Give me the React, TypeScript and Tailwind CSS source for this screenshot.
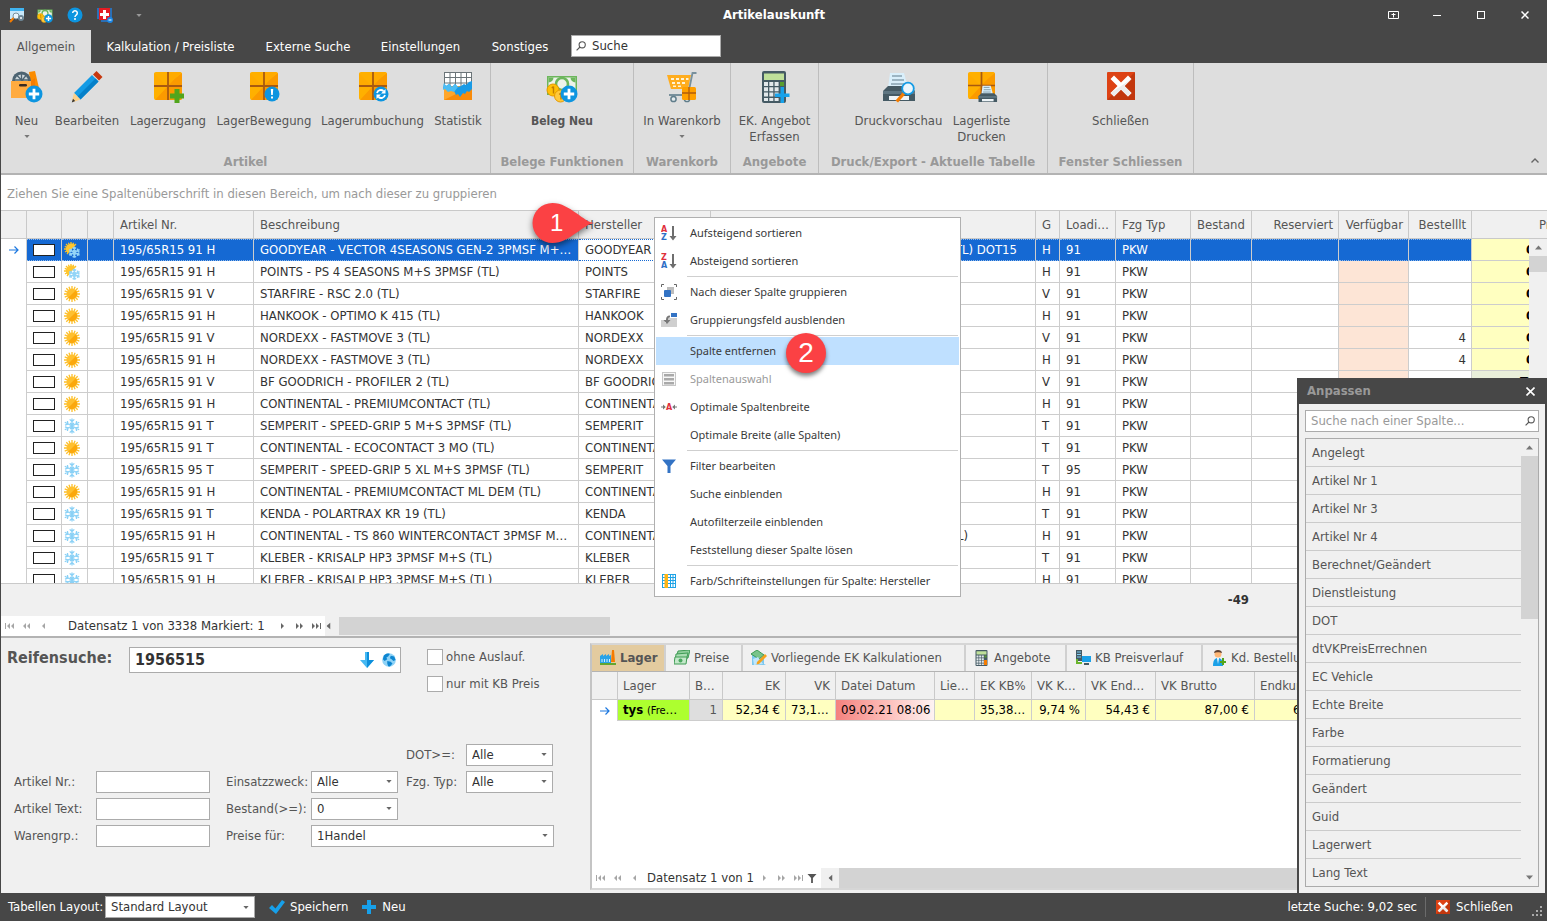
import React from "react";

type Season = "all" | "summer" | "winter";

interface Tyre {
  size: string;
  season: Season;
  text: string;
  brand: string;
  speed: string;
  load: string;
  ordered?: string;
  extra?: string;
  extraClass?: string;
}

const tyres: Tyre[] = [
  { size: "195/65R15 91 H", season: "all", text: "GOODYEAR - VECTOR 4SEASONS GEN-2 3PMSF M+S (TL) DOT15", brand: "GOODYEAR", speed: "H", load: "91", extra: "(TL) DOT15", extraClass: "pr-[18px]" },
  { size: "195/65R15 91 H", season: "all", text: "POINTS - PS 4 SEASONS M+S 3PMSF (TL)", brand: "POINTS", speed: "H", load: "91" },
  { size: "195/65R15 91 V", season: "summer", text: "STARFIRE - RSC 2.0 (TL)", brand: "STARFIRE", speed: "V", load: "91" },
  { size: "195/65R15 91 H", season: "summer", text: "HANKOOK - OPTIMO K 415 (TL)", brand: "HANKOOK", speed: "H", load: "91" },
  { size: "195/65R15 91 V", season: "summer", text: "NORDEXX - FASTMOVE 3 (TL)", brand: "NORDEXX", speed: "V", load: "91", ordered: "4" },
  { size: "195/65R15 91 H", season: "summer", text: "NORDEXX - FASTMOVE 3 (TL)", brand: "NORDEXX", speed: "H", load: "91", ordered: "4" },
  { size: "195/65R15 91 V", season: "summer", text: "BF GOODRICH - PROFILER 2 (TL)", brand: "BF GOODRICH", speed: "V", load: "91" },
  { size: "195/65R15 91 H", season: "summer", text: "CONTINENTAL - PREMIUMCONTACT (TL)", brand: "CONTINENTAL", speed: "H", load: "91" },
  { size: "195/65R15 91 T", season: "winter", text: "SEMPERIT - SPEED-GRIP 5 M+S 3PMSF (TL)", brand: "SEMPERIT", speed: "T", load: "91" },
  { size: "195/65R15 91 T", season: "summer", text: "CONTINENTAL - ECOCONTACT 3 MO (TL)", brand: "CONTINENTAL", speed: "T", load: "91" },
  { size: "195/65R15 95 T", season: "winter", text: "SEMPERIT - SPEED-GRIP 5 XL M+S 3PMSF (TL)", brand: "SEMPERIT", speed: "T", load: "95" },
  { size: "195/65R15 91 H", season: "summer", text: "CONTINENTAL - PREMIUMCONTACT ML DEM (TL)", brand: "CONTINENTAL", speed: "H", load: "91" },
  { size: "195/65R15 91 T", season: "winter", text: "KENDA - POLARTRAX KR 19 (TL)", brand: "KENDA", speed: "T", load: "91" },
  { size: "195/65R15 91 H", season: "winter", text: "CONTINENTAL - TS 860 WINTERCONTACT 3PMSF M+S (TL)", brand: "CONTINENTAL", speed: "H", load: "91", extra: "(TL)", extraClass: "pr-[67px]" },
  { size: "195/65R15 91 T", season: "winter", text: "KLEBER - KRISALP HP3 3PMSF M+S (TL)", brand: "KLEBER", speed: "T", load: "91" },
  { size: "195/65R15 91 H", season: "winter", text: "KLEBER - KRISALP HP3 3PMSF M+S (TL)", brand: "KLEBER", speed: "H", load: "91" },
];

const hiddenColumns = [
  "Angelegt", "Artikel Nr 1", "Artikel Nr 3", "Artikel Nr 4", "Berechnet/Geändert", "Dienstleistung",
  "DOT", "dtVKPreisErrechnen", "EC Vehicle", "Echte Breite", "Farbe", "Formatierung", "Geändert",
  "Guid", "Lagerwert", "Lang Text",
];

/* ---------- small shared drawings ---------- */

const Caret = ({ className = "" }: { className?: string }) => (
  <svg viewBox="0 0 7 4" className={`shrink-0 ${className}`} fill="currentColor"><path d="M0 0h7L3.5 4z" /></svg>
);

const SmallPlus = () => (
  <g>
    <circle cx="23" cy="23" r="8.5" fill="#0d95e0" />
    <path d="M23 17.8v10.4M17.8 23h10.4" stroke="#fff" strokeWidth="2.8" />
  </g>
);

const Sun = () => (
  <svg viewBox="0 0 16 16" className="h-4 w-4">
    <g stroke="#fdc02a" strokeWidth="1.3">
      <path d="M8 0v16M0 8h16M2.300 2.300l11.400 11.400M13.700 2.300L2.300 13.700M4.900.7l6.200 14.600M11.100.7L4.900 15.300M.7 4.900l14.600 6.200M.7 11.100l14.600-6.200" />
    </g>
    <circle cx="8" cy="8" r="5.400" fill="#ffc02e" />
    <path d="M11.800 4.200a5.400 5.400 0 0 1-7.600 7.600z" fill="#fba80c" />
  </svg>
);

const flake = "M8 .5v15M.8 4.200l14.400 7.600M.8 11.800l14.400-7.600M5.700 1.400L8 3.600l2.300-2.200M5.700 14.600L8 12.400l2.300 2.200M1 7.200l3-1.100L3.400 3M15 8.800l-3 1.100.6 3.100M1 8.800l3 1.100L3.400 13M15 7.200l-3-1.100.6-3.100M6 5l2 2 2-2M6 11l2-2 2 2";
const Snow = () => (
  <svg viewBox="0 0 16 16" className="h-4 w-4" fill="none" stroke="#8ad1f6" strokeWidth="1.300"><path d={flake} /></svg>
);

const SunSnow = () => (
  <svg viewBox="0 0 16 16" className="h-4 w-4">
    <g stroke="#fcc021" strokeWidth="1.300"><path d="M7 0v6M0 7h6M2 2l4 4M12 2L8 6M4.400.8L7 7M.8 4.400L7 7M9.600.8L7 7M1 10l5-3M3 12l4-5" /></g>
    <path d="M11.400 3.200A5 5 0 1 0 3.500 11z" fill="#ffc62e" />
    <g transform="translate(4.500 4.500) scale(.73)" fill="none" stroke="#93d5f7" strokeWidth="1.900"><path d={flake} /></g>
  </svg>
);

const RowArrow = () => (
  <svg viewBox="0 0 10 8" className="h-2 w-[10px]" fill="none" stroke="#1c78e0" strokeWidth="1.200"><path d="M0 4h9M5.500.5L9 4 5.500 7.500" /></svg>
);

const Magnifier = () => (
  <svg viewBox="0 0 10 10" className="h-[10px] w-[10px] shrink-0" fill="none" stroke="#555" strokeWidth="1.100"><circle cx="6.200" cy="3.800" r="3.100" /><path d="M4 6L.6 9.400" /></svg>
);

type NavKind = "first" | "pagePrev" | "prev" | "next" | "pageNext" | "last";

const NavGlyph = ({ kind, dim }: { kind: NavKind; dim?: boolean }) => {
  const paths = {
    first: "M0 0h1v6H0zM5 0v6L2 3zM9 0v6L6 3z",
    pagePrev: "M4 0v6L1 3zM8 0v6L5 3z",
    prev: "M6 0v6L3 3z",
    next: "M3 0v6l3-3z",
    pageNext: "M1 0v6l3-3zM5 0v6l3-3z",
    last: "M0 0v6l3-3zM4 0v6l3-3zM8 0h1v6H8z",
  };
  return (
    <svg viewBox="0 0 9 6" className="h-[6px] w-[9px]" fill={dim ? "#a6a6a6" : "#666"}><path d={paths[kind]} /></svg>
  );
};

const NavButton = (p: { kind: NavKind; dim?: boolean }) => (
  <button type="button" aria-label={p.kind} className="flex h-5 w-[17px] shrink-0 items-center justify-center"><NavGlyph {...p} /></button>
);

const RedX = ({ className }: { className: string }) => (
  <svg viewBox="0 0 28 28" className={className}>
    <rect width="28" height="28" rx="1" fill="#dd4214" />
    <path d="M28 0v28H0z" fill="#c2370d" />
    <path d="M7 3.500l7 7 7-7L24.500 7l-7 7 7 7-3.500 3.500-7-7-7 7L3.500 21l7-7-7-7z" fill="#fff" />
    <path d="M24.500 7l-7 7 7 7-3.500 3.500-7-7-7 7L3.500 21z" fill="#ececec" />
  </svg>
);

/* ---------- ribbon icons ---------- */

const Ribbon = ({ children }: { children: React.ReactNode }) => (
  <svg viewBox="0 0 32 32" className="h-8 w-8 shrink-0">{children}</svg>
);

const BoxShape = ({ size = 28 }: { size?: number }) => (
  <g transform={`translate(2 1) scale(${size / 28})`}>
    <rect width="28" height="28" rx="2" fill="#ffb000" />
    <path d="M28 1v25a2 2 0 0 1-2 2H1L13 15V13z" fill="#fb9a00" />
    <path d="M0 1l13 13H0zM15 0h12L15 13z" fill="#ffab00" />
    <path d="M14 0v28M0 14h28" stroke="#a85a10" strokeWidth="1.800" />
  </g>
);

const IconNew = () => (
  <Ribbon>
    <path d="M18 1l6-1 4 17h-8z" fill="#fb8c00" />
    <circle cx="10.500" cy="10" r="9.500" fill="#4d6472" />
    <circle cx="10.500" cy="10" r="6.500" fill="#cfd8dc" />
    <path d="M10.500 3v8M4 9h13M6 4.500l9 9M15 4.500L8 13" stroke="#4d6472" strokeWidth="1.300" />
    <path d="M0 10h20v17H0z" fill="#ffab40" />
    <path d="M20 10l4-3v19l-4 1z" fill="#f57c00" />
    <rect x="8" y="13" width="8" height="2.600" rx="1.300" fill="#3b2b20" />
    <SmallPlus />
  </Ribbon>
);
const IconPencil = () => (
  <Ribbon>
    <path d="M25.500 0l6 6-3.500 3.500-6-6z" fill="#c7380f" />
    <path d="M21 4l6.500 6.500L9.500 28.500 3 22z" fill="#139be5" />
    <path d="M24.500 7.500l3 3-18 18-3-3z" fill="#0580c9" />
    <path d="M3 22l6.500 6.500L2.500 31l-1.500-1z" fill="#fdd18a" />
    <path d="M2 27.800l2.200 2.200L.8 31.400z" fill="#333" />
  </Ribbon>
);
const IconBoxPlus = () => (
  <Ribbon><BoxShape /><path d="M22.500 18h5v4.500H32v5h-4.500V32h-5v-4.500H18v-5h4.500z" fill="#51a51c" /></Ribbon>
);
const IconBoxInfo = () => (
  <Ribbon><BoxShape /><circle cx="24" cy="23" r="7.500" fill="#0d95e0" /><path d="M22.800 18h2.400l-.4 6h-1.600zM23 25.500h2v2h-2z" fill="#fff" /></Ribbon>
);
const IconBoxSync = () => (
  <Ribbon><BoxShape /><circle cx="24" cy="23" r="7.500" fill="#0d95e0" />
    <path d="M20 22a4 4 0 0 1 6.500-2M28 24a4 4 0 0 1-6.500 2" fill="none" stroke="#fff" strokeWidth="1.800" />
    <path d="M28.500 18v4.500H24zM19.500 28v-4.500H24z" fill="#fff" /></Ribbon>
);
const IconChart = () => (
  <Ribbon>
    <path d="M2 1h28v16H2z" fill="#fff" />
    <path d="M2.500 1v15M8 1v15M13.500 1v15M19 1v15M24.500 1v15M29.500 1v15M2 1.500h28M2 6.500h28M2 12h28" stroke="#6b7478" strokeWidth="1" />
    <path d="M2 15h28v14H2z" fill="#ffa62b" /><path d="M30 15v14H2z" fill="#f98b0a" />
    <path d="M2 12l2 3 3-2 3 3 3-3 3 3 3-1 3-2 2 1 3-3 3-1v8l-3 3-2-1-2 3-2-1-3 4-2-3-2 1-2-4-3-1-3 1-3-3-2 1z" fill="#1a9be6" />
    <path d="M2 12l2 3 3-2 3 3 3-3 3 3-4 5-3-1-3 1-3-3-2 1z" fill="#4cbdf4" />
  </Ribbon>
);
const MoneyArt = () => (
  <g>
    <path d="M1 5h30v19H1z" fill="#6cb65c" /><path d="M2.500 6.500h27v16h-27z" fill="#edf3ea" />
    <circle cx="16" cy="13" r="6" fill="none" stroke="#6cb65c" strokeWidth="2.600" />
    <path d="M2.500 6.500h5a5 5 0 0 1-5 5zM29.500 6.500h-5a5 5 0 0 0 5 5z" fill="#6cb65c" />
    <circle cx="7" cy="19" r="6" fill="#ffc107" stroke="#e69a00" /><circle cx="14.500" cy="25" r="6" fill="#ffc93c" stroke="#e69a00" />
    <path d="M7.500 15.500v7M5.800 17l1.700-1.500M15 22v6.500M13.200 23.500l1.800-1.500" stroke="#c27c00" strokeWidth="1.400" fill="none" />
    <SmallPlus />
  </g>
);
const IconMoney = () => <Ribbon><MoneyArt /></Ribbon>;
const IconCart = () => (
  <Ribbon>
    <path d="M1 4h24l-3 14H5z" fill="#ffad1f" />
    <path d="M5 7h3v2H5zM10 7h3v2h-3zM15 7h3v2h-3zM20 7h2.500v2H20zM6 11h3v2H6zM11 11h3v2h-3zM16 11h3v2h-3zM7 14.500h3v1.500H7zM12 14.500h3v1.500h-3z" fill="#fff3d6" />
    <path d="M30.500 2h-4L22 24H3" fill="none" stroke="#78909c" strokeWidth="1.800" />
    <circle cx="7.500" cy="28" r="2.600" fill="#e4eaed" stroke="#607d8b" strokeWidth="1.500" /><circle cx="21" cy="28" r="2.600" fill="#fff" stroke="#607d8b" strokeWidth="1.500" />
    <rect x="16" y="16" width="14" height="13" rx="1.500" fill="#ffa000" /><path d="M23 16v13M16 22h14" stroke="#b15c0c" strokeWidth="1.300" />
  </Ribbon>
);
const CalcArt = () => (
  <g>
    <rect x="3" width="24" height="32" rx="2" fill="#455a64" /><rect x="5" y="2.500" width="20" height="6.500" fill="#bfe09a" />
    <path d="M5 11h4v4H5zM10.300 11h4v4h-4zM15.600 11h4v4h-4zM5 16.300h4v4H5zM10.300 16.300h4v4h-4zM15.600 16.300h4v4h-4zM5 21.600h4v4H5zM10.300 21.600h4v4h-4zM15.600 21.600h4v4h-4zM5 26.900h4v3H5zM10.300 26.900h4v3h-4zM15.600 26.900h4v3h-4z" fill="#e3e9ec" />
    <path d="M21 11h4v4h-4z" fill="#5a9e2d" />
  </g>
);
const IconCalc = () => (
  <Ribbon><CalcArt /><path d="M21.500 16h3.500v6.500h5.500v3.500H25v6h-3.500v-6H16v-3.500h5.500z" fill="#18a2ea" /></Ribbon>
);
const PrinterArt = () => (
  <g>
    <path d="M7 2h14l4 15H5z" fill="#d9effb" /><path d="M9 5h10M9 9h12M8 13h13" stroke="#607d8b" strokeWidth="1.200" />
    <path d="M5 15h22l5 5v10H0V20z" fill="#455a64" /><path d="M0 20h32v3H0z" fill="#5f7682" /><path d="M6 25h20v4H6z" fill="#eef4f7" />
  </g>
);
const IconPreview = () => (
  <Ribbon><PrinterArt /><path d="M20 21l-7.500 8.500 2.500 2 7.500-8.500z" fill="#f57c00" /><circle cx="25" cy="17.500" r="5.800" fill="#eaf6fd" stroke="#139be5" strokeWidth="1.800" /></Ribbon>
);
const IconStockList = () => (
  <Ribbon><BoxShape size={27} /><g transform="translate(12.500 13.500) scale(.58)"><PrinterArt /></g></Ribbon>
);

/* ---------- ribbon layout ---------- */

const RibbonButton = ({ icon, width, label, bold, caret }: { icon: React.ReactNode; width: string; label: React.ReactNode; bold?: boolean; caret?: boolean }) => (
  <button type="button" className={`flex flex-col items-center pt-2 leading-4 ${width} ${bold ? "text-[12px] font-bold" : ""}`}>
    {icon}
    <span className="mt-[10px] whitespace-nowrap">{label}</span>
    {caret && <Caret className="mt-[6px] h-[3px] w-[6px] text-[#777]" />}
  </button>
);

const RibbonGroup = ({ title, width, children }: { title: string; width: string; children: React.ReactNode }) => (
  <section className={`flex shrink-0 flex-col border-r border-[#bdbdbd] ${width}`}>
    <div className="flex flex-1 justify-center">{children}</div>
    <h2 className="h-5 text-center leading-[18px] font-bold whitespace-nowrap text-[#999]">{title}</h2>
  </section>
);

/* ---------- form pieces ---------- */

const Select = ({ id, value, className }: { id: string; value: string; className: string }) => (
  <span className={`relative inline-flex items-center ${className}`}>
    <select id={id} defaultValue={value} className="h-full w-full appearance-none rounded-none border border-[#ababab] bg-white pl-[5px] text-[#333] outline-none">
      <option>{value}</option>
    </select>
    <Caret className="pointer-events-none absolute right-[6px] h-[3px] w-[6px] text-[#666]" />
  </span>
);

const Field = ({ id, label, className }: { id: string; label: string; className: string }) => (
  <>
    <label htmlFor={id} className={`col-start-1 whitespace-nowrap ${className}`}>{label}</label>
    <input id={id} className={`col-start-2 h-[22px] w-[114px] border border-[#ababab] bg-white px-1 outline-none ${className}`} />
  </>
);

/* ---------- context menu ---------- */

const SortIcon = ({ top, bottom }: { top: string; bottom: string }) => (
  <svg viewBox="0 0 16 16" className="h-4 w-4">
    <text x="0" y="6.500" fontSize="8" fontWeight="700" fontFamily="DejaVu Sans" fill="#e0303c">{top}</text>
    <text x="0" y="15" fontSize="8" fontWeight="700" fontFamily="DejaVu Sans" fill="#2f6fc6">{bottom}</text>
    <path d="M11 1h2v10h2.500L12 15.500 8.500 11H11z" fill="#6e6e6e" />
  </svg>
);
const GroupIcon = () => (
  <svg viewBox="0 0 16 16" className="h-4 w-4"><path d="M3 .5H.5V3M13 .5h2.500V3M3 15.500H.5V13M13 15.500h2.500V13" fill="none" stroke="#666" /><rect x="6" y="3" width="7" height="7" fill="#bdbdbd" /><rect x="3" y="6" width="7" height="7" rx="1" fill="#3373c4" /></svg>
);
const GroupPanelIcon = () => (
  <svg viewBox="0 0 16 16" className="h-4 w-4"><path d="M0 8h4v3h3V6h9v9H0z" fill="#cfcfcf" /><rect x="10" y="1" width="6" height="4" fill="#3373c4" /><path d="M9 3.500C6 3.500 5 5 5 8H2.500L6 12l3.500-4H7c0-2 .5-2.500 2-2.500z" fill="#777" /></svg>
);
const ChooserIcon = () => (
  <svg viewBox="0 0 16 16" className="h-4 w-4"><rect x="1.500" y="1.500" width="13" height="13" fill="#f7f7f7" stroke="#c6c6c6" /><path d="M3 3h10v2.500H3zM3 7h10v2.500H3zM3 11h10v2.500H3z" fill="#a9a9a9" /></svg>
);
const FitIcon = () => (
  <svg viewBox="0 0 16 16" className="h-4 w-4"><path d="M0 7.500h2V5.500L4.800 8 2 10.500v-2H0zM16 7.500h-2V5.500L11.200 8l2.800 2.500v-2h2z" fill="#777" /><text x="8" y="11" textAnchor="middle" fontSize="8" fontWeight="700" fontFamily="DejaVu Sans" fill="#e0303c">A</text></svg>
);
const FilterIcon = () => (
  <svg viewBox="0 0 16 16" className="h-4 w-4"><path d="M1 1.500h14L9.500 8v7h-3V8z" fill="#3373c4" /></svg>
);
const GridIcon = () => (
  <svg viewBox="0 0 16 16" className="h-4 w-4"><path d="M1 1h14v14H1z" fill="#fff" /><path d="M1 1.500h14M1 4.500h14M1 7.500h14M1 10.500h14M1 14.500h14M1.500 1v14M9.500 1v14M12 1v14M14.500 1v14" stroke="#1ea3e6" /><path d="M3.500 1H7v14H3.500z" fill="#fdb515" /></svg>
);

interface Entry { label: string; icon?: React.ReactNode; active?: boolean; disabled?: boolean; line?: boolean }
const menu: Entry[] = [
  { label: "Aufsteigend sortieren", icon: <SortIcon top="A" bottom="Z" /> },
  { label: "Absteigend sortieren", icon: <SortIcon top="Z" bottom="A" /> },
  { label: "Nach dieser Spalte gruppieren", icon: <GroupIcon />, line: true },
  { label: "Gruppierungsfeld ausblenden", icon: <GroupPanelIcon /> },
  { label: "Spalte entfernen", active: true, line: true },
  { label: "Spaltenauswahl", icon: <ChooserIcon />, disabled: true },
  { label: "Optimale Spaltenbreite", icon: <FitIcon /> },
  { label: "Optimale Breite (alle Spalten)" },
  { label: "Filter bearbeiten", icon: <FilterIcon />, line: true },
  { label: "Suche einblenden" },
  { label: "Autofilterzeile einblenden" },
  { label: "Feststellung dieser Spalte lösen" },
  { label: "Farb/Schrifteinstellungen für Spalte: Hersteller", icon: <GridIcon />, line: true },
];

const ContextMenu = () => (
  <div role="menu" className="absolute top-[217px] left-[653px] z-10 w-[307px] border border-[#b0b0b0] bg-white p-px font-['Noto_Sans','Open_Sans',sans-serif] text-[11px] text-[#3a3a3a]">
    {menu.map((m) => (
      <React.Fragment key={m.label}>
        {m.line && <div className="my-px mr-px ml-[31px] h-px bg-[#cfcfcf]" />}
        <button type="button" role="menuitem" disabled={m.disabled} className={`flex h-7 w-full items-center text-left ${m.active ? "bg-[#bfe0ff]" : ""} ${m.disabled ? "text-[#9a9a9a]" : ""}`}>
          <span className="flex w-[34px] shrink-0 justify-start pl-[5px]">{m.icon}</span>
          <span className="whitespace-nowrap">{m.label}</span>
        </button>
      </React.Fragment>
    ))}
  </div>
);

/* ---------- main grid ---------- */

const headClass = "border-r border-b border-[#c9c9c9] font-normal overflow-hidden whitespace-nowrap";
const cellBase = "border-r border-b overflow-hidden text-ellipsis whitespace-nowrap";

const ArticleTable = () => (
  <table className="w-[1620px] table-fixed border-separate border-spacing-0 text-[#333]">
    <colgroup>
      <col className="w-[26px]" /><col className="w-[35px]" /><col className="w-[26px]" /><col className="w-[26px]" />
      <col className="w-[140px]" /><col className="w-[325px]" /><col className="w-[132px]" /><col className="w-[325px]" />
      <col className="w-[24px]" /><col className="w-[56px]" /><col className="w-[75px]" /><col className="w-[61px]" />
      <col className="w-[87px]" /><col className="w-[70px]" /><col className="w-[63px]" /><col />
    </colgroup>
    <thead>
      <tr className="h-7 bg-[#f0f0f0] text-left text-[#555]">
        <th className={headClass} /><th className={headClass} /><th className={headClass} /><th className={headClass} />
        <th className={`${headClass} px-[6px]`}>Artikel Nr.</th>
        <th className={`${headClass} px-[6px]`}>Beschreibung</th>
        <th className={`${headClass} px-[6px]`}>Hersteller</th>
        <th className={headClass} />
        <th className={`${headClass} px-[6px]`}>G</th>
        <th className={`${headClass} px-[6px] text-ellipsis`}>Loadindex</th>
        <th className={`${headClass} px-[6px]`}>Fzg Typ</th>
        <th className={`${headClass} px-[6px]`}>Bestand</th>
        <th className={`${headClass} px-[5px] text-right`}>Reserviert</th>
        <th className={`${headClass} px-[5px] text-right`}>Verfügbar</th>
        <th className={`${headClass} px-[5px] text-right`}>Bestelllt</th>
        <th className={`${headClass} pl-[67px]`}>Preis</th>
      </tr>
    </thead>
    <tbody>
      {tyres.map((t, i) => {
        const sel = i === 0;
        const cell = sel
          ? `${cellBase} border-t border-y-[#8fb8ea] border-r-[#cdcdcd] border-t-dotted bg-[#1569d3] text-white [border-block-style:dotted]`
          : `${cellBase} border-[#cdcdcd] bg-white`;
        const text = `${cell} px-[6px]`;
        return (
          <tr key={i} className="h-[22px]">
            <td className="border-r border-[#cdcdcd] bg-white pl-2">{sel && <RowArrow />}</td>
            <td className={text}><span className="block h-3 w-[22px] border border-[#222] bg-white" /></td>
            <td className={`${cell} pl-[2px]`}>{t.season === "summer" ? <Sun /> : t.season === "winter" ? <Snow /> : <SunSnow />}</td>
            <td className={cell} />
            <td className={text}>{t.size}</td>
            <td className={text}>{t.text}</td>
            <td className={sel ? `${cellBase} border-t border-y-[#1569d3] border-r-[#cdcdcd] bg-white px-[6px] [border-block-style:dotted]` : text}>{t.brand}</td>
            <td className={`${cell} text-right ${t.extraClass ?? ""}`}>{t.extra}</td>
            <td className={text}>{t.speed}</td>
            <td className={text}>{t.load}</td>
            <td className={text}>PKW</td>
            <td className={cell} />
            <td className={cell} />
            <td className={sel ? cell : `${cellBase} border-[#cdcdcd] bg-[#fde5d6]`} />
            <td className={`${cell} pr-[5px] text-right`}>{t.ordered}</td>
            <td className={`${cellBase} border-[#cdcdcd] font-bold text-black ${i === 6 ? "bg-[#e9efda] pl-[48px]" : "bg-[#ffffc0] pl-[54px]"}`}>{i === 6 ? "TL" : "0"}</td>
          </tr>
        );
      })}
    </tbody>
  </table>
);

/* ---------- lower right ---------- */

const TabIcon = ({ children }: { children: React.ReactNode }) => <svg viewBox="0 0 16 16" className="h-4 w-4 shrink-0">{children}</svg>;

const stockTabs = [
  { label: "Lager", width: "w-[74px]", active: true, icon: <TabIcon><path d="M12 0h2l1 12h-4z" fill="#f57c00" /><path d="M0 6l3-2v2l3-2v2l3-2v2l2-1v8H0z" fill="#29a3e8" /><path d="M2 9v3M4.500 9v3M7 9v3M9.500 9v3" stroke="#d5effc" strokeWidth="1" /><path d="M0 13h16v2H0z" fill="#63a62f" /></TabIcon> },
  { label: "Preise", width: "w-[77px]", icon: <TabIcon><path d="M4 1l12-1-2 8-12 1z" fill="#8fce9b" stroke="#3f9c55" /><path d="M2 4l12-1-2 8-11 1z" fill="#a9dcb2" stroke="#3f9c55" /><path d="M1 7h12l-1 7H0z" fill="#c4e8ca" stroke="#3f9c55" /><circle cx="6.500" cy="10.500" r="2" fill="#4aa860" /></TabIcon> },
  { label: "Vorliegende EK Kalkulationen", width: "w-[223px]", icon: <TabIcon><path d="M1 4h12v10l2 1H1z" fill="#7cc8ef" /><path d="M0 4l6-4 7 5-5 4z" fill="#79c48a" stroke="#3f9c55" /><path d="M2 9l5-2 5 7-9 1z" fill="#bfe6fb" /><path d="M14 4l2 2-8 8-2.500.5L6 12z" fill="#f6a21b" /></TabIcon> },
  { label: "Angebote", width: "w-[101px]", icon: <TabIcon><g transform="scale(.5)"><CalcArt /><path d="M20 20h6v10h-6z" fill="#f57c00" /></g></TabIcon> },
  { label: "KB Preisverlauf", width: "w-[136px]", icon: <TabIcon><path d="M1 0h6v11H1z" fill="#455a64" /><path d="M2 2h4M2 4.500h4M2 7h4" stroke="#7fcdf5" /><path d="M2 9v4h5" fill="none" stroke="#6ab52c" strokeWidth="2" /><path d="M7 6h9v6H7z" fill="#1ba1e8" /><path d="M9 13h5v2H9z" fill="#455a64" /></TabIcon> },
  { label: "Kd. Bestellungen", width: "w-[150px]", icon: <TabIcon><circle cx="7" cy="4" r="3.500" fill="#ffb877" /><path d="M3 3c0-4 8-4 8 0-2-1-6-1-8 0z" fill="#5c4033" /><path d="M2 16c0-6 2-8 5-8s5 2 5 8z" fill="#1ba1e8" /><path d="M6 8h2l-1 6z" fill="#fff" /><path d="M12 8v7M9 12h6" stroke="#51a51c" strokeWidth="2" /></TabIcon> },
];

const sh = "h-7 border-r border-b border-[#c9c9c9] px-[5px] font-normal overflow-hidden text-ellipsis whitespace-nowrap";
const sc = "h-[21px] border-r border-b border-[#cdcdcd] px-[5px] overflow-hidden whitespace-nowrap";

const StockTable = () => (
  <table className="w-[1000px] table-fixed border-separate border-spacing-0 text-black">
    <colgroup>
      <col className="w-[26px]" /><col className="w-[72px]" /><col className="w-[33px]" /><col className="w-[63px]" />
      <col className="w-[50px]" /><col className="w-[99px]" /><col className="w-[40px]" /><col className="w-[57px]" />
      <col className="w-[54px]" /><col className="w-[70px]" /><col className="w-[99px]" /><col />
    </colgroup>
    <thead>
      <tr className="bg-[#f0f0f0] text-left text-[#555]">
        <th className={sh} /><th className={sh}>Lager</th><th className={sh}>Bestand</th><th className={`${sh} text-right`}>EK</th>
        <th className={`${sh} text-right`}>VK</th><th className={sh}>Datei Datum</th><th className={sh}>Lieferant</th>
        <th className={sh}>EK KB%</th><th className={`${sh} text-right`}>VK KB%</th><th className={sh}>VK Endkunde</th>
        <th className={sh}>VK Brutto</th><th className={sh}>Endkunde</th>
      </tr>
    </thead>
    <tbody>
      <tr>
        <td className="border-r border-[#cdcdcd] pl-2"><RowArrow /></td>
        <td className={`${sc} bg-[#adff2f] text-ellipsis`}><b>tys</b> <span className="text-[11px]">(Fremdlager)</span></td>
        <td className={`${sc} bg-[#dedede] text-right text-[#555]`}>1</td>
        <td className={`${sc} bg-[#ffffc0] text-right`}>52,34 €</td>
        <td className={`${sc} bg-[#ffffc0] text-ellipsis`}>73,14 €</td>
        <td className={`${sc} bg-linear-to-r from-[#f4817e] to-[#fdf3f3]`}>09.02.21 08:06</td>
        <td className={`${sc} bg-[#ffffc0]`} />
        <td className={`${sc} bg-[#ffffc0] text-ellipsis`}>35,38 %</td>
        <td className={`${sc} bg-[#ffffc0] text-right`}>9,74 %</td>
        <td className={`${sc} bg-[#ffffc0] text-right`}>54,43 €</td>
        <td className={`${sc} bg-[#ffffc0] text-right`}>87,00 €</td>
        <td className={`${sc} bg-[#ffffc0] pl-[38px]`}>64,00 €</td>
      </tr>
    </tbody>
  </table>
);

const ColumnChooser = () => (
  <aside className="absolute top-[378px] right-0 bottom-7 z-20 flex w-[250px] flex-col border-x-2 border-[#474747] bg-[#f0f0f0]">
    <header className="flex h-[26px] shrink-0 items-center justify-between bg-[#474747] pr-[10px] pl-2">
      <h2 className="font-bold text-[#999]">Anpassen</h2>
      <button type="button" aria-label="Schließen"><svg viewBox="0 0 9 9" className="h-[9px] w-[9px]" stroke="#fff" strokeWidth="1.600"><path d="M.5.5l8 8M8.500.5l-8 8" /></svg></button>
    </header>
    <div className="mx-[6px] mt-[6px] flex h-[22px] shrink-0 items-center border border-[#ababab] bg-white pr-[3px] pl-[5px]">
      <input aria-label="Suche nach einer Spalte" placeholder="Suche nach einer Spalte..." className="min-w-0 flex-1 outline-none placeholder:text-[#999]" />
      <Magnifier />
    </div>
    <div className="mx-[6px] mt-[6px] mb-[6px] flex min-h-0 flex-1 border border-[#ababab]">
      <ul className="min-w-0 flex-1 overflow-hidden text-[#555]">
        {hiddenColumns.map((c) => (
          <li key={c} className="h-7 border-b border-[#cbcbcb] px-[6px] leading-7 whitespace-nowrap">{c}</li>
        ))}
      </ul>
      <div className="flex w-[17px] flex-col items-center text-[#777]">
        <span className="flex h-[17px] items-center"><Caret className="h-[5px] w-[7px] rotate-180" /></span>
        <span className="h-[163px] w-full bg-[#d3d3d3]" />
        <span className="mt-auto flex h-[17px] items-center"><Caret className="h-[5px] w-[7px]" /></span>
      </div>
    </div>
  </aside>
);

const tabs = [
  { label: "Kalkulation / Preisliste", width: "w-[159px]" },
  { label: "Externe Suche", width: "w-[116px]" },
  { label: "Einstellungen", width: "w-[109px]" },
  { label: "Sonstiges", width: "w-[90px]" },
];

const winBtn = "flex h-[30px] w-11 items-center justify-center";

export default function App() {
  return (
    <div className="relative flex h-screen min-h-[700px] flex-col overflow-hidden border-l border-[#474747] bg-[#f0f0f0] font-['DejaVu_Sans_Condensed','DejaVu_Sans',sans-serif] text-[13px] text-[#555]">
      {/* title bar */}
      <header className="grid h-[30px] shrink-0 grid-cols-[1fr_auto_1fr] items-center bg-[#474747] text-white">
        <div className="flex items-center pl-2">
          <button type="button" aria-label="Artikelsuche" className="w-7"><svg viewBox="0 0 16 16" className="h-4 w-4"><path d="M1 1h14v11H1z" fill="#c8e8fa" /><path d="M1 1h14v3H1z" fill="#40b4f0" /><circle cx="7" cy="9" r="3" fill="#eaf6fd" stroke="#78909c" /><path d="M4.500 11L1 15" stroke="#f57c00" strokeWidth="2" /><circle cx="12" cy="11" r="3" fill="#6d8796" /><circle cx="12" cy="11" r="1" fill="#fff" /></svg></button>
          <button type="button" aria-label="Beleg Neu" className="w-[30px]"><svg viewBox="0 0 32 32" className="h-4 w-4"><MoneyArt /></svg></button>
          <button type="button" aria-label="Hilfe" className="w-[30px]"><svg viewBox="0 0 16 16" className="h-4 w-4"><circle cx="8" cy="8" r="7.500" fill="#0d95e0" /><path d="M5.700 6a2.300 2.300 0 1 1 3.500 2c-.9.6-1.200.9-1.200 2" fill="none" stroke="#fff" strokeWidth="1.500" /><circle cx="8" cy="12" r="1" fill="#fff" /></svg></button>
          <button type="button" aria-label="Fernwartung" className="w-[34px]"><svg viewBox="0 0 16 16" className="h-4 w-4"><path d="M0 1h15v11H0zM4 13h7v2H4z" fill="#2b6fb5" /><path d="M2 1h11v12H2z" fill="#e51c23" /><path d="M6 3h3v3h3v3H9v3H6V9H3V6h3z" fill="#fff" /><circle cx="13" cy="13" r="3" fill="#1b87e5" /><path d="M11.500 13h3" stroke="#fff" /></svg></button>
          <button type="button" aria-label="Mehr" className="flex w-[15px] justify-center"><Caret className="h-[3px] w-[6px] text-[#999]" /></button>
        </div>
        <h1 className="font-bold">Artikelauskunft</h1>
        <div className="flex justify-end">
          <button type="button" aria-label="Ribbon" className={winBtn}><svg viewBox="0 0 11 8" className="h-2 w-[11px]" fill="none" stroke="#fff"><path d="M.5.500h10v7H.5zM5.500 2v4.500M3.500 3.500h4" /></svg></button>
          <button type="button" aria-label="Minimieren" className={winBtn}><span className="h-px w-2 bg-white" /></button>
          <button type="button" aria-label="Maximieren" className={winBtn}><span className="h-2 w-2 border border-white" /></button>
          <button type="button" aria-label="Fenster schließen" className={winBtn}><svg viewBox="0 0 8 8" className="h-2 w-2" stroke="#fff" strokeWidth="1.500"><path d="M.5.5l7 7M7.500.5l-7 7" /></svg></button>
        </div>
      </header>

      {/* ribbon tabs */}
      <nav className="flex h-[33px] shrink-0 items-stretch bg-[#474747] text-white">
        <button type="button" className="w-[90px] bg-[#dedede] text-[#555]">Allgemein</button>
        {tabs.map((t) => <button key={t.label} type="button" className={`whitespace-nowrap ${t.width}`}>{t.label}</button>)}
        <div className="mt-[5px] ml-[6px] flex h-[22px] w-[150px] items-center gap-[6px] border border-[#ababab] bg-white px-1 text-[#333]">
          <Magnifier />
          <input aria-label="Suche" defaultValue="Suche" className="min-w-0 flex-1 outline-none" />
        </div>
      </nav>

      {/* ribbon */}
      <div className="flex h-[112px] shrink-0 border-b-2 border-[#b3b3b3] bg-[#dedede]">
        <RibbonGroup title="Artikel" width="w-[490px]">
          <RibbonButton icon={<IconNew />} width="w-[46px]" label="Neu" caret />
          <RibbonButton icon={<IconPencil />} width="w-[75px]" label="Bearbeiten" />
          <RibbonButton icon={<IconBoxPlus />} width="w-[87px]" label="Lagerzugang" />
          <RibbonButton icon={<IconBoxInfo />} width="w-[105px]" label="LagerBewegung" />
          <RibbonButton icon={<IconBoxSync />} width="w-[112px]" label="Lagerumbuchung" />
          <RibbonButton icon={<IconChart />} width="w-[59px]" label="Statistik" />
        </RibbonGroup>
        <RibbonGroup title="Belege Funktionen" width="w-[143px]"><RibbonButton icon={<IconMoney />} width="w-20" label="Beleg Neu" bold /></RibbonGroup>
        <RibbonGroup title="Warenkorb" width="w-[97px]"><RibbonButton icon={<IconCart />} width="w-20" label="In Warenkorb" caret /></RibbonGroup>
        <RibbonGroup title="Angebote" width="w-[88px]"><RibbonButton icon={<IconCalc />} width="w-20" label={<>EK. Angebot<br />Erfassen</>} /></RibbonGroup>
        <RibbonGroup title="Druck/Export - Aktuelle Tabelle" width="w-[229px]">
          <RibbonButton icon={<IconPreview />} width="w-[97px]" label="Druckvorschau" />
          <RibbonButton icon={<IconStockList />} width="w-[69px]" label={<>Lagerliste<br />Drucken</>} />
        </RibbonGroup>
        <RibbonGroup title="Fenster Schliessen" width="w-[146px]">
          <RibbonButton icon={<span className="flex h-8 w-8 items-start justify-center pt-px"><RedX className="h-7 w-7" /></span>} width="w-20" label="Schließen" />
        </RibbonGroup>
        <button type="button" aria-label="Ribbon einklappen" className="mt-auto mr-2 mb-[10px] ml-auto"><svg viewBox="0 0 8 5" className="h-[5px] w-2" fill="none" stroke="#666" strokeWidth="1.400"><path d="M.5 4.500L4 1l3.500 3.500" /></svg></button>
      </div>

      {/* article grid */}
      <div className="flex h-[35px] shrink-0 items-center bg-white px-[6px] pt-[2px] text-[#999]">
        Ziehen Sie eine Spaltenüberschrift in diesen Bereich, um nach dieser zu gruppieren
      </div>
      <div className="relative min-h-0 flex-1 overflow-hidden border-t border-b border-[#c9c9c9] bg-white">
        <ArticleTable />
        <div className="absolute top-7 right-0 bottom-0 flex w-[18px] flex-col items-center bg-[#f0f0f0] text-[#777]">
          <span className="flex h-[17px] items-center"><Caret className="h-[5px] w-[7px] rotate-180" /></span>
          <span className="h-4 w-full bg-[#d3d3d3]" />
        </div>
      </div>
      <div className="h-[32px] w-[1248px] shrink-0 text-right leading-8 font-bold text-[#333]">-49</div>
      <div className="flex h-5 shrink-0 items-center">
        <div className="flex h-full w-[324px] shrink-0 items-center bg-white">
          <NavButton kind="first" dim /><NavButton kind="pagePrev" dim /><NavButton kind="prev" dim />
          <span className="ml-4 w-[206px] whitespace-nowrap text-[#333]">Datensatz 1 von 3338 Markiert: 1</span>
          <NavButton kind="next" /><NavButton kind="pageNext" /><NavButton kind="last" />
        </div>
        <span className="flex w-[14px] justify-start text-[#666]"><Caret className="h-1 w-[7px] rotate-90" /></span>
        <span className="h-[18px] w-[271px] bg-[#d3d3d3]" />
      </div>

      {/* lower area */}
      <div className="flex h-[257px] shrink-0 border-t-2 border-[#b3b3b3]">
        <form className="w-[589px] shrink-0" onSubmit={(e) => e.preventDefault()}>
          <div className="flex pt-[9px] pl-[6px]">
            <label htmlFor="tyre" className="w-[122px] text-[16px] leading-[22px] font-bold whitespace-nowrap">Reifensuche:</label>
            <div className="flex h-[26px] w-[272px] items-center gap-2 border border-[#ababab] bg-white pr-1 pl-[5px]">
              <input id="tyre" defaultValue="1956515" className="min-w-0 flex-1 text-[16px] font-bold text-[#333] outline-none" />
              <svg viewBox="0 0 14 16" className="h-4 w-[14px]"><path d="M5 0h4v8h5l-7 8-7-8h5z" fill="#45b8f2" /><path d="M7 0h2v8h5l-7 8z" fill="#0d8fdb" /></svg>
              <svg viewBox="0 0 16 16" className="h-[14px] w-[14px]"><circle cx="8" cy="8" r="7.800" fill="#8fd3f7" /><path d="M2 3c3-3 5-2.500 7-2L7 4 5 5l1 2-3 2-2-2zM10 3l4 1 1.500 4-2.500 1-2-2-2-1zM6 9l4 1 2 2-3 3.500-2-.5-1-3z" fill="#0d86d1" /></svg>
            </div>
            <div className="ml-[26px] flex flex-col gap-[11px] pt-[2px]">
              {["ohne Auslauf.", "nur mit KB Preis"].map((l) => (
                <label key={l} className="flex h-4 items-center gap-[3px] whitespace-nowrap">
                  <input type="checkbox" className="h-4 w-4 appearance-none border border-[#ababab] bg-white" />{l}
                </label>
              ))}
            </div>
          </div>
          <div className="mt-[49px] ml-[13px] grid grid-cols-[82px_130px_85px_95px_60px_88px] grid-rows-[27px_27px_27px_27px] items-center">
            <Field id="nr" label="Artikel Nr.:" className="row-start-2" />
            <Field id="txt" label="Artikel Text:" className="row-start-3" />
            <Field id="grp" label="Warengrp.:" className="row-start-4" />
            <label htmlFor="use" className="col-start-3 row-start-2 whitespace-nowrap">Einsatzzweck:</label>
            <Select id="use" value="Alle" className="col-start-4 row-start-2 h-[22px] w-[87px]" />
            <label htmlFor="min" className="col-start-3 row-start-3 whitespace-nowrap">Bestand(&gt;=):</label>
            <Select id="min" value="0" className="col-start-4 row-start-3 h-[22px] w-[87px]" />
            <label htmlFor="for" className="col-start-3 row-start-4 whitespace-nowrap">Preise für:</label>
            <Select id="for" value="1Handel" className="col-span-3 col-start-4 row-start-4 h-[22px]" />
            <label htmlFor="dot" className="col-start-5 row-start-1 whitespace-nowrap">DOT&gt;=:</label>
            <Select id="dot" value="Alle" className="col-start-6 row-start-1 h-[22px] w-[87px]" />
            <label htmlFor="typ" className="col-start-5 row-start-2 whitespace-nowrap">Fzg. Typ:</label>
            <Select id="typ" value="Alle" className="col-start-6 row-start-2 h-[22px] w-[87px]" />
          </div>
        </form>

        <section className="mt-[5px] mb-[3px] flex min-w-0 flex-1 flex-col overflow-hidden border-2 border-r-0 border-[#d6d6d6] border-l-[#c4c4c4] bg-white">
          <div className="flex h-[27px] shrink-0 border-b border-[#b3b3b3] bg-[#f0f0f0]">
            {stockTabs.map((t) => (
              <button key={t.label} type="button" className={`flex shrink-0 items-center gap-1 border-r-2 border-[#d0d0d0] pl-2 whitespace-nowrap ${t.width} ${t.active ? "bg-[#e3cb9f] font-bold" : ""}`}>
                {t.icon}<span>{t.label}</span>
              </button>
            ))}
          </div>
          <div className="flex-1 overflow-hidden"><StockTable /></div>
          <div className="flex h-5 shrink-0 items-center">
            <NavButton kind="first" dim /><NavButton kind="pagePrev" dim /><NavButton kind="prev" dim />
            <span className="ml-1 w-[109px] whitespace-nowrap text-[#333]">Datensatz 1 von 1</span>
            <NavButton kind="next" dim /><NavButton kind="pageNext" dim /><NavButton kind="last" dim />
            <svg viewBox="0 0 10 10" className="h-[9px] w-[10px] shrink-0" fill="#555"><path d="M0 0h10L6 4.500V10H4V4.500z" /></svg>
            <span className="ml-1 flex h-full w-[18px] items-center justify-center bg-[#f0f0f0] text-[#666]"><Caret className="h-1 w-[7px] rotate-90" /></span>
            <span className="h-full flex-1 bg-[#d3d3d3]" />
          </div>
        </section>
      </div>

      {/* status bar */}
      <footer className="flex h-7 shrink-0 items-center bg-[#474747] text-white">
        <label htmlFor="layout" className="w-[104px] pl-[7px] whitespace-nowrap">Tabellen Layout:</label>
        <Select id="layout" value="Standard Layout" className="h-[22px] w-[150px]" />
        <button type="button" className="ml-[14px] flex items-center gap-[5px]">
          <svg viewBox="0 0 16 14" className="h-[14px] w-4"><path d="M0 8l3-3 3.500 3.500L13 0l3 2L7 14z" fill="#17a0ea" /></svg>Speichern
        </button>
        <button type="button" className="ml-[14px] flex items-center gap-[6px]">
          <svg viewBox="0 0 14 14" className="h-[14px] w-[14px]"><path d="M5 0h4v5h5v4H9v5H5V9H0V5h5z" fill="#17a0ea" /></svg>Neu
        </button>
        <span className="mr-2 ml-auto">letzte Suche: 9,02 sec</span>
        <span className="mr-[10px] h-5 w-px bg-[#6b6b6b]" />
        <button type="button" className="mr-[18px] flex items-center gap-[6px]"><RedX className="h-[14px] w-[14px]" />Schließen</button>
        <svg viewBox="0 0 12 12" className="mt-2 mr-1 h-3 w-3" fill="#aaa"><path d="M9 1h2v2H9zM9 5h2v2H9zM9 9h2v2H9zM5 5h2v2H5zM5 9h2v2H5zM1 9h2v2H1z" /></svg>
      </footer>

      <ContextMenu />
      <ColumnChooser />

      {/* step markers */}
      <div className="absolute top-[202px] left-[531px] z-30 flex h-[42px] w-[64px] items-center pl-[18px] font-['Liberation_Sans',sans-serif] text-[24px] text-white">
        <svg viewBox="0 0 64 42" className="absolute top-0 left-0 h-[42px] w-[64px] drop-shadow-[0_3px_3px_rgba(0,0,0,0.5)]"><path d="M63 21C52 21 38 41 20.500 41a20 20 0 0 1 0-40C38 1 52 21 63 21z" fill="#fb4144" /></svg>
        <span className="relative">1</span>
      </div>
      <div className="absolute top-[333px] left-[785px] z-30 flex h-10 w-10 items-center justify-center rounded-full bg-[#fb4144] font-['Liberation_Sans',sans-serif] text-[28px] text-white shadow-[0_3px_4px_rgba(0,0,0,0.5)]">2</div>
    </div>
  );
}
